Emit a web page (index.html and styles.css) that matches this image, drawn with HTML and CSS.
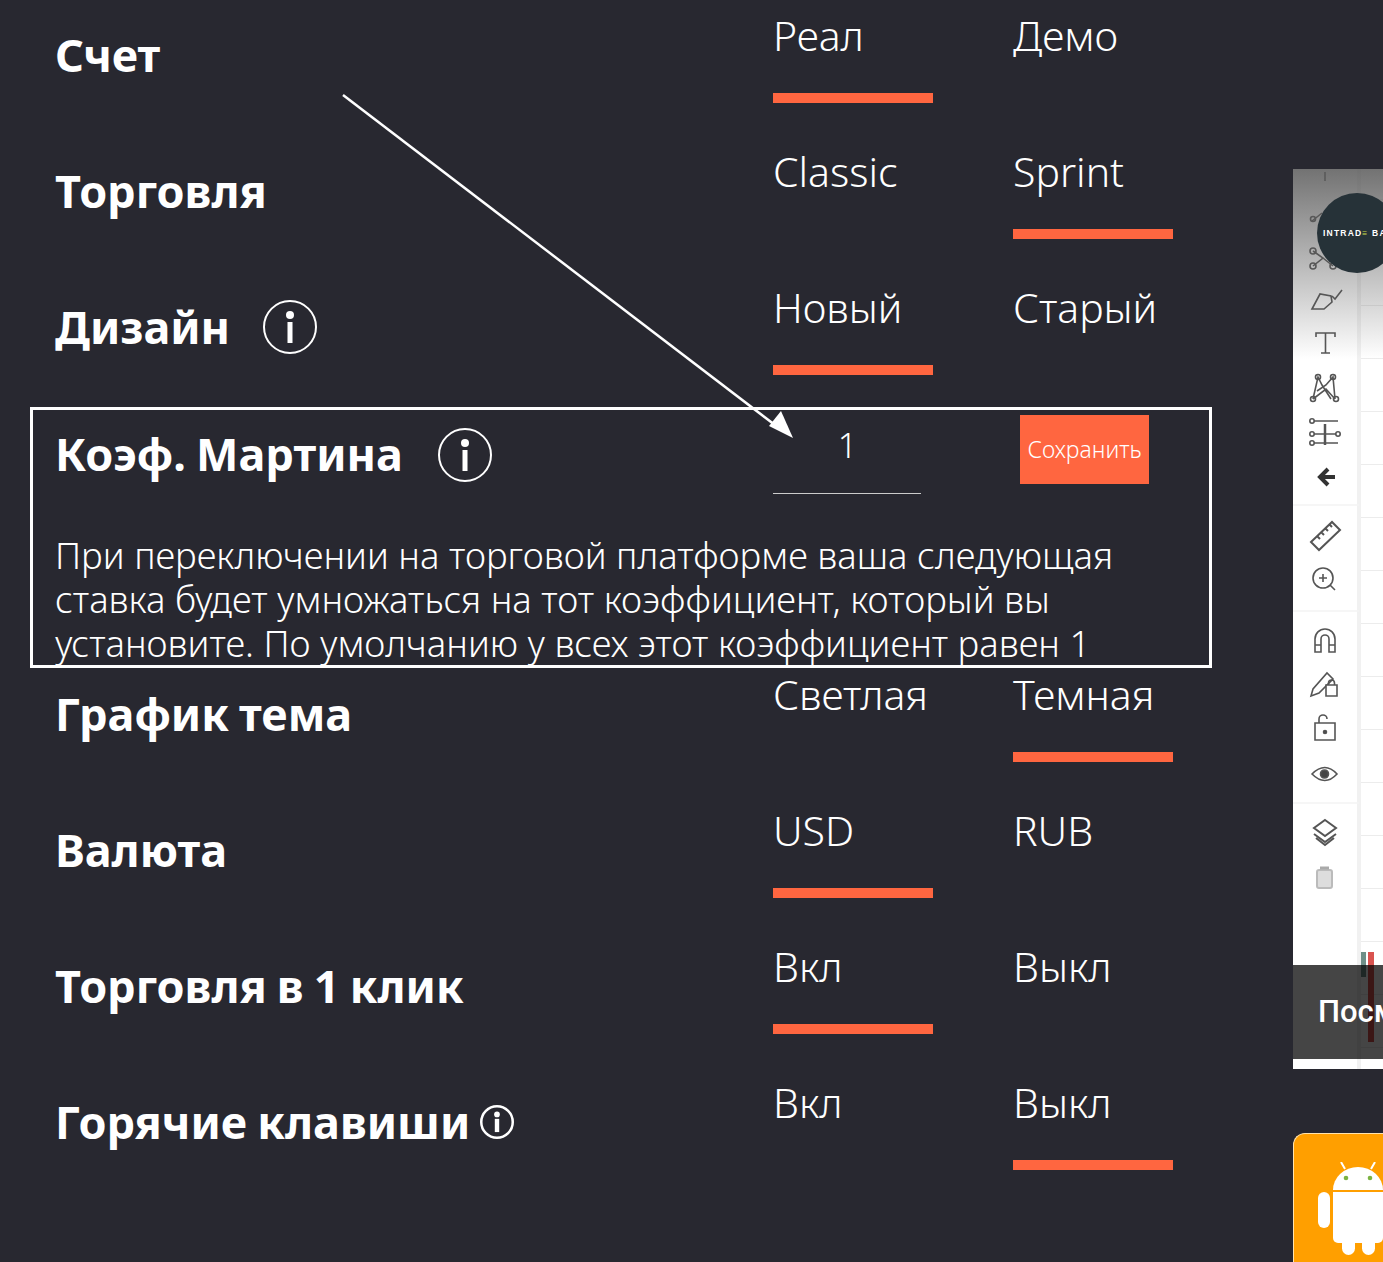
FILE: index.html
```html
<!DOCTYPE html>
<html lang="ru">
<head>
<meta charset="utf-8">
<title>Настройки</title>
<link rel="stylesheet" href="styles.css">
</head>
<body>
<div class="page">
  <main class="settings">
    <section class="row">
      <h2 class="label">Счет</h2>
      <div class="options"><span class="opt on">Реал</span><span class="opt">Демо</span></div>
    </section>
    <section class="row">
      <h2 class="label">Торговля</h2>
      <div class="options"><span class="opt">Classic</span><span class="opt on">Sprint</span></div>
    </section>
    <section class="row row-tight">
      <h2 class="label">Дизайн
        <svg class="info" viewBox="0 0 54 54"><circle cx="27" cy="27" r="26" fill="none" stroke="#fff" stroke-width="2"/><circle cx="27" cy="15" r="4" fill="#fff"/><rect x="24.5" y="22" width="5" height="21" fill="#fff"/></svg>
      </h2>
      <div class="options"><span class="opt on">Новый</span><span class="opt">Старый</span></div>
    </section>
    <section class="box">
      <div class="box-head">
        <h2 class="label box-label">Коэф. Мартина
          <svg class="info" viewBox="0 0 54 54"><circle cx="27" cy="27" r="26" fill="none" stroke="#fff" stroke-width="2"/><circle cx="27" cy="15" r="4" fill="#fff"/><rect x="24.5" y="22" width="5" height="21" fill="#fff"/></svg>
        </h2>
        <div class="box-ctrl">
          <div class="value">1</div>
          <button class="save">Сохранить</button>
        </div>
      </div>
      <p class="desc">При переключении на торговой платформе ваша следующая ставка будет умножаться на тот коэффициент, который вы установите. По умолчанию у всех этот коэффициент равен 1</p>
    </section>
    <section class="row">
      <h2 class="label">График тема</h2>
      <div class="options"><span class="opt">Светлая</span><span class="opt on">Темная</span></div>
    </section>
    <section class="row">
      <h2 class="label">Валюта</h2>
      <div class="options"><span class="opt on">USD</span><span class="opt">RUB</span></div>
    </section>
    <section class="row">
      <h2 class="label">Торговля в 1 клик</h2>
      <div class="options"><span class="opt on">Вкл</span><span class="opt">Выкл</span></div>
    </section>
    <section class="row">
      <h2 class="label">Горячие клавиши
        <svg class="info info-sm" viewBox="0 0 54 54"><circle cx="27" cy="27" r="25" fill="none" stroke="#fff" stroke-width="4"/><circle cx="27" cy="15" r="4.5" fill="#fff"/><rect x="23.5" y="22" width="7" height="21" fill="#fff"/></svg>
      </h2>
      <div class="options"><span class="opt">Вкл</span><span class="opt on">Выкл</span></div>
    </section>
  </main>
  <aside class="side">
    <div class="preview">
      <div class="grid"></div>
      <svg class="tools" viewBox="0 0 66 800" fill="none" stroke="#555" stroke-width="1.6">
        <path d="M0 336h66M0 442h66M0 634h66" stroke="#f4f4f4"/>
        <path d="M32 3v9"/>
        <path d="M19 52l10-8"/><circle cx="20" cy="50" r="2.5"/>
        <path d="M20 82l10 7-10 8M30 89l10 8"/><circle cx="20" cy="82" r="3"/><circle cx="20" cy="97" r="3"/><circle cx="40" cy="97" r="3"/>
        <path d="M19 140l8-15 11 2 1 6-8 7zM39 127l3 3 7-9"/>
        <path d="M23 168v-4h19v4M32.500 164v20M28 184h9"/>
        <path d="M20 230l5-22 4 8 9 14M42 230l-2-22-7 8-9 6M20 230l13-10 9 10"/><circle cx="25" cy="208" r="2.500"/><circle cx="40" cy="208" r="2.500"/><circle cx="20" cy="230" r="2.500"/><circle cx="43" cy="230" r="2.500"/>
        <path d="M21 252h24M21 265h22M21 274h24"/><path d="M32 255v21" stroke-width="2.500"/><circle cx="19" cy="252" r="2.200"/><circle cx="19" cy="265" r="2.200"/><circle cx="45" cy="265" r="2.200"/><circle cx="19" cy="274" r="2.200"/>
        <path d="M42 308H27M35 300l-8 8 8 8" stroke="#333" stroke-width="4"/>
        <path d="M18 373l21-20 8 8-21 20zM24 367l3 3M28 363l3 3M32 359l3 3M36 355l3 3" stroke-width="2"/>
        <circle cx="30" cy="409" r="10"/><path d="M37 416l5 5M30 405v8M26 409h8"/>
        <path d="M22 483v-13a10 10 0 0 1 20 0v13h-6v-13a4 4 0 0 0-8 0v13zM22 476h6M36 476h6"/>
        <path d="M18 527l2-7 14-16 6 6-14 14z"/><path d="M33 516h11v11H33z" fill="#fff"/><path d="M35.500 516v-2a3 3 0 0 1 6 0v2"/>
        <path d="M22 554h20v17H22zM26 554v-4a4 4 0 0 1 8 0"/><circle cx="32" cy="563" r="1.500" fill="#444"/>
        <path d="M19 605q13-13 25 0q-12 13-25 0z"/><circle cx="31.500" cy="605" r="4" fill="#444"/>
        <path d="M32 651l11 8-11 8-11-8zM21 665l11 8 11-8M23 669l9 7 9-7" stroke-width="2"/>
        <rect x="24" y="701" width="15" height="18" rx="2" fill="#ddd" stroke="#bbb" stroke-width="2"/><path d="M27 699h9" stroke="#aaa" stroke-width="3"/>
      </svg>
      <div class="fade"></div>
      <div class="logo"><span class="logo-text">INTRAD<span class="logo-e">≡</span> BAR</span></div>
      <div class="candles"><span class="candle c1"></span><span class="candle c2"></span></div>
      <div class="caption">Посмотреть видео</div>
    </div>
    <div class="badge">
      <svg class="android" viewBox="0 0 90 100">
        <path d="M23 0l4 7M57 0l-4 7" stroke="#fff" stroke-width="2" fill="none"/>
        <path d="M15 28a25 23 0 0 1 50 0z" fill="#fff"/>
        <circle cx="28" cy="16" r="2.300" fill="#7cb342"/><circle cx="52" cy="16" r="2.300" fill="#7cb342"/>
        <path d="M15 30h50v46a5 5 0 0 1-5 5H20a5 5 0 0 1-5-5z" fill="#fff"/>
        <rect x="0" y="30" width="12" height="36" rx="6" fill="#fff"/><rect x="68" y="30" width="12" height="36" rx="6" fill="#fff"/>
        <rect x="24" y="66" width="13" height="27" rx="6.500" fill="#fff"/><rect x="44" y="66" width="13" height="27" rx="6.500" fill="#fff"/>
      </svg>
    </div>
  </aside>
</div>
<svg class="arrow" viewBox="0 0 1383 1262"><path d="M343 95L775 425" stroke="#fff" stroke-width="2.500" fill="none"/><path d="M793 438L769 426L781 411z" fill="#fff"/></svg>
</body>
</html>
```
FILE: styles.css
```css
* { box-sizing: border-box; }
html, body { margin: 0; height: 1262px; overflow: hidden; background: #282830; }
body { font-family: "Noto Sans", "Open Sans", sans-serif; color: #fff; position: relative; }
.page { display: flex; align-items: flex-start; width: 1383px; height: 1262px; overflow: hidden; }
.settings { width: 1293px; flex: none; padding: 15px 0 0 30px; }
.row { display: flex; height: 88px; margin-bottom: 48px; }
.row-tight { margin-bottom: 32px; }
.label { width: 743px; margin: 4px 0 0; padding-left: 25px; font-size: 45px; word-spacing: -1.5px; line-height: 44px; font-weight: 700; display: flex; align-items: center; white-space: nowrap; flex: none; height: 72px; }
.options { display: flex; gap: 80px; }
.opt { width: 160px; height: 88px; font-size: 41px; font-weight: 300; line-height: 40px; border-bottom: 10px solid transparent; }
.opt.on { border-bottom-color: #ff6640; }
.info { width: 54px; height: 54px; margin-left: 33px; flex: none; }
.info-sm { width: 34px; height: 34px; margin-left: 10px; }
.box { width: 1182px; height: 261px; border: 3px solid #fff; margin-bottom: 6px; }
.box-head { display: flex; height: 123px; }
.box-label { margin-top: 22px; padding-left: 22px; width: 740px; height: 44px; }
.box-label .info { margin-left: 35px; margin-top: 1px; }
.box-ctrl { display: flex; align-items: flex-start; }
.value { width: 148px; height: 84px; border-bottom: 1px solid #ccc; text-align: center; font-size: 34px; font-weight: 300; line-height: 70px; padding-left: 1px; }
.save { margin: 5px 0 0 99px; width: 129px; height: 69px; border: 0; background: #ff6640; color: #fff; font: 300 23px/1 "Noto Sans", sans-serif; padding: 0; }
.desc { margin: 0; padding: 0 22px; font-size: 36.5px; font-weight: 300; line-height: 44px; }
.side { width: 90px; flex: none; margin-top: 169px; display: flex; flex-direction: column; gap: 64px; }
.preview { height: 900px; background: #fff; position: relative; overflow: hidden; }
.fade { position: absolute; inset: 0 0 auto 0; height: 190px; background: linear-gradient(rgba(90,90,90,.85), rgba(255,255,255,0)); }
.grid { position: absolute; left: 64px; top: 0; right: 0; bottom: 0; border-left: 4px solid #f1f1f1; background: repeating-linear-gradient(transparent 0 30px, #ececec 30px 31.000px, transparent 31.000px 53px); }
.tools { position: absolute; left: 0; top: 0; width: 66px; height: 800px; filter: blur(.45px); }
.logo { position: absolute; left: 24px; top: 24px; width: 80px; height: 80px; border-radius: 50%; background: #263238; overflow: hidden; display: flex; align-items: center; padding-left: 6px; }
.logo-text { font: 700 8.5px/1 "Liberation Sans", sans-serif; letter-spacing: 1.2px; color: #fff; white-space: nowrap; }
.logo-e { color: #c8d84a; }
.candles { position: absolute; left: 68px; top: 783px; display: flex; gap: 2px; }
.candle { width: 5px; height: 25px; }
.c1 { background: #6f8f88; }
.c2 { width: 6px; background: #d9534f; height: 90px; }
.caption { position: absolute; left: 0; right: 0; top: 796px; height: 94px; background: rgba(0,0,0,.73); font: 500 31px/94px Roboto, "Liberation Sans", sans-serif; padding-left: 25px; white-space: nowrap; overflow: hidden; }
.badge { height: 140px; background: #ff9f00; border-radius: 12px 0 0 0; border: solid #ffe3ad; border-width: 1px 0 0 1px; padding: 28px 0 0 24px; overflow: hidden; }
.android { width: 90px; height: 100px; display: block; }
.arrow { position: absolute; left: 0; top: 0; width: 1383px; height: 1262px; pointer-events: none; }
```
